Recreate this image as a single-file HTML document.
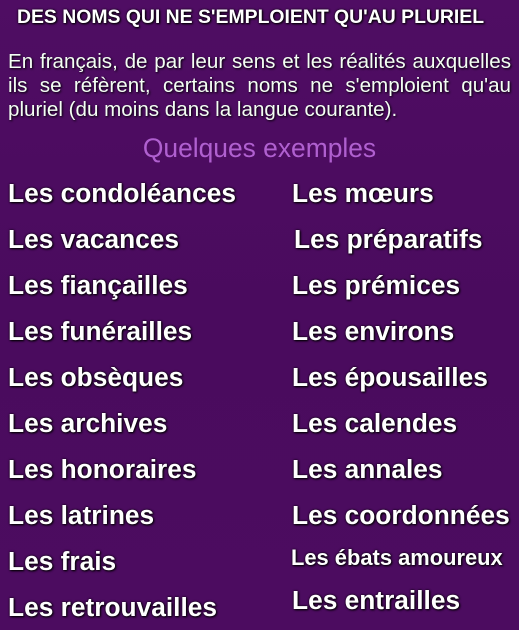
<!DOCTYPE html>
<html><head><meta charset="utf-8"><style>
html,body{margin:0;padding:0}
body{width:519px;height:630px;background:#4b0c5f;background:linear-gradient(180deg,#4f0d63 0%,#4a0b5e 50%,#4c0c60 100%);font-family:"Liberation Sans",sans-serif;color:#fff;position:relative;overflow:hidden}
.t{position:absolute;white-space:nowrap;text-shadow:1px 1px 2px #000,0 0 2px #000}
.h{left:17px;top:6px;font-size:19.4px;font-weight:bold}
.p{position:absolute;left:8px;width:503px;font-size:20.6px;line-height:24px;color:#f4fff4;text-shadow:1px 1px 2px #000;white-space:nowrap}
.j{text-align:justify;text-align-last:justify}
.q{left:0;width:519px;text-align:center;top:133px;font-size:26.4px;color:#b060d0;text-shadow:none}
.l{font-size:26.3px;font-weight:bold}
</style></head><body>
<div class="t h">DES NOMS QUI NE S'EMPLOIENT QU'AU PLURIEL</div>
<div class="p j" style="top:50px;white-space:normal">En français, de par leur sens et les réalités auxquelles</div>
<div class="p j" style="top:74px;white-space:normal">ils se réfèrent, certains noms ne s'emploient qu'au</div>
<div class="p" style="top:98px">pluriel (du moins dans la langue courante).</div>
<div class="t q">Quelques exemples</div>
<div class="t l" style="left:8px;top:178px">Les condoléances</div>
<div class="t l" style="left:8px;top:224px">Les vacances</div>
<div class="t l" style="left:8px;top:270px">Les fiançailles</div>
<div class="t l" style="left:8px;top:316px">Les funérailles</div>
<div class="t l" style="left:8px;top:362px">Les obsèques</div>
<div class="t l" style="left:8px;top:408px">Les archives</div>
<div class="t l" style="left:8px;top:454px">Les honoraires</div>
<div class="t l" style="left:8px;top:500px">Les latrines</div>
<div class="t l" style="left:8px;top:546px">Les frais</div>
<div class="t l" style="left:8px;top:592px">Les retrouvailles</div>
<div class="t l" style="left:292px;top:178px">Les mœurs</div>
<div class="t l" style="left:294px;top:224px">Les préparatifs</div>
<div class="t l" style="left:292px;top:270px">Les prémices</div>
<div class="t l" style="left:292px;top:316px">Les environs</div>
<div class="t l" style="left:292px;top:362px">Les épousailles</div>
<div class="t l" style="left:292px;top:408px">Les calendes</div>
<div class="t l" style="left:292px;top:454px">Les annales</div>
<div class="t l" style="left:292px;top:500px">Les coordonnées</div>
<div class="t l" style="left:291px;top:545px;font-size:21.9px">Les ébats amoureux</div>
<div class="t l" style="left:292px;top:585px">Les entrailles</div>
</body></html>
